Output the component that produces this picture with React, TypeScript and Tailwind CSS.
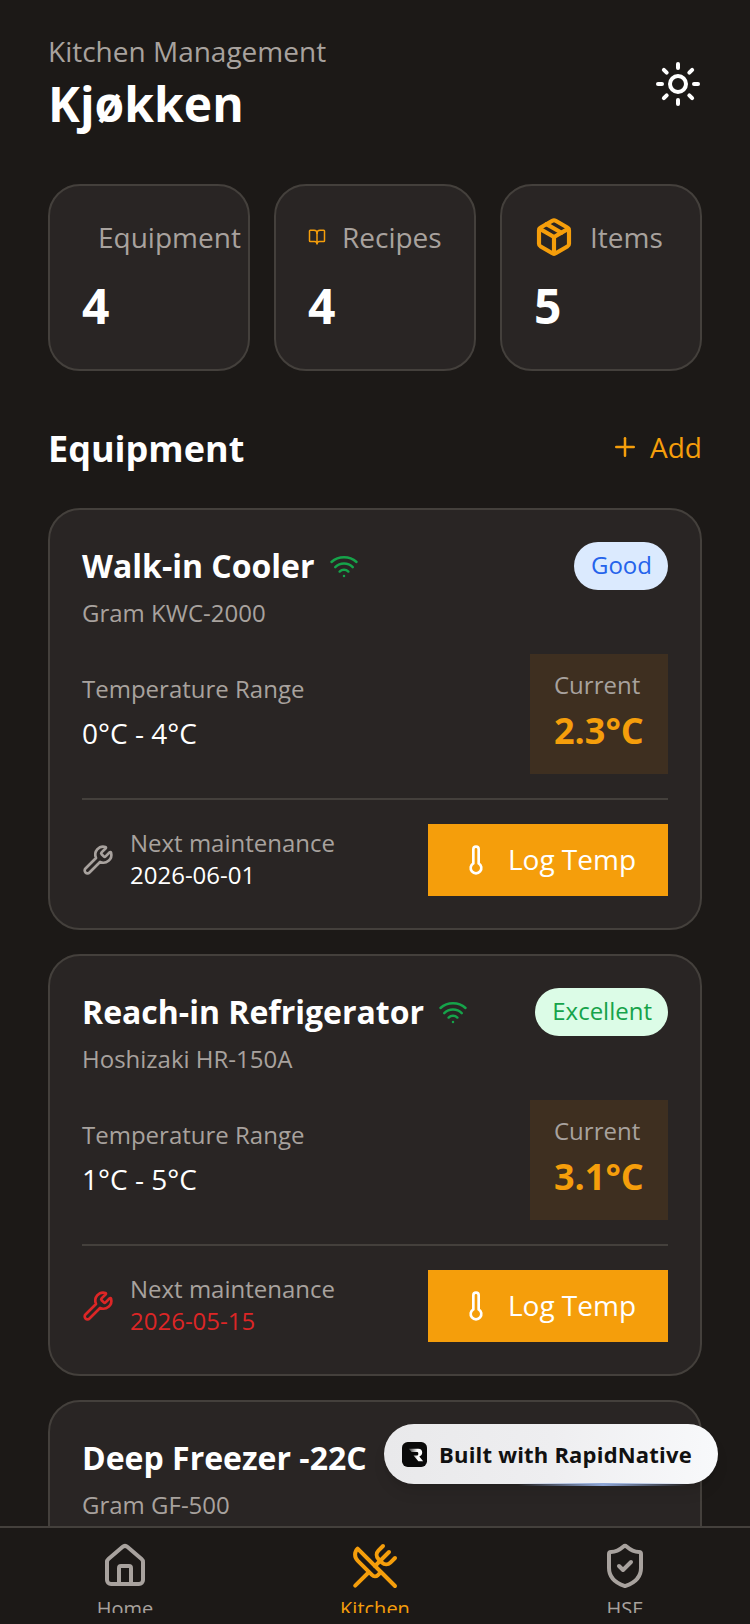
import React from "react";
import { BookOpen, House, Package, Plus, ShieldCheck, Sun, Thermometer, UtensilsCrossed, Wifi, Wrench } from "lucide-react";

interface EquipmentCardProps {
    name: string;
    model: string;
    status: string;
    statusClass: string;
    range: string;
    current: string;
    date: string;
    overdue?: boolean;
    connected?: boolean;
}

const EquipmentCard: React.FC<EquipmentCardProps> = ({ name, model, status, statusClass, range, current, date, overdue, connected }) => {
    return (
        <div className="shrink-0 rounded-[32px] border-2 border-[#44403c] bg-[#292524] p-8">
            <div className="flex items-start justify-between">
                <div>
                    <div className="flex items-center gap-[14px]">
                        <p className="text-[32px] leading-[48px] font-bold text-white">{name}</p>
                        {connected && <Wifi size={30} strokeWidth={2} className="text-[#16a34a]" />}
                    </div>
                    <p className="mt-[5px] text-2xl leading-9 text-[#a8a29e]">{model}</p>
                </div>
                <div className={`h-12 rounded-full pt-[5px] pr-4 pl-[17px] text-2xl leading-9 ${statusClass}`}>{status}</div>
            </div>

            <div className="mt-[23px] flex items-center justify-between">
                <div className="pb-[3px]">
                    <p className="text-2xl leading-9 text-[#a8a29e]">Temperature Range</p>
                    <p className="mt-[5px] text-[28px] leading-[42px] text-white">{range}</p>
                </div>
                <div className="flex w-[138px] flex-col items-start bg-[#3e2f20] pt-[13px] pb-[19px] pl-6">
                    <p className="text-2xl leading-9 text-[#a8a29e]">Current</p>
                    <p className="mt-1 text-4xl leading-[48px] font-bold whitespace-nowrap text-[#f59e0b]">{current}</p>
                </div>
            </div>

            <div className="mt-6 flex items-center justify-between border-t-2 border-[#44403c] pt-6">
                <div className="flex items-center gap-4">
                    <Wrench size={32} strokeWidth={2} className={overdue ? "text-[#dc2626]" : "text-[#a8a29e]"} />
                    <div className="pb-[2px]">
                        <p className="text-2xl leading-8 text-[#a8a29e]">Next maintenance</p>
                        <p className={`text-2xl leading-8 ${overdue ? "text-[#dc2626]" : "text-white"}`}>{date}</p>
                    </div>
                </div>
                <div className="flex h-[72px] w-[240px] items-center justify-center gap-4 bg-[#f59e0b]">
                    <Thermometer size={32} strokeWidth={2} className="text-white" />
                    <span className="pb-[2px] text-[28px] leading-[42px] text-white">Log Temp</span>
                </div>
            </div>
        </div>
    );
};

interface StatCardProps {
    label: string;
    value: string;
    icon?: React.ReactNode;
}

const StatCard: React.FC<StatCardProps> = ({ label, value, icon }) => {
    return (
        <div className="h-[187px] rounded-[32px] border-2 border-[#44403c] bg-[#292524] pt-[33px] pl-8">
            <div className="flex h-9 items-center gap-4 whitespace-nowrap">
                {icon ?? <span className="w-0" />}
                <span className="text-[28px] leading-9 text-[#a8a29e]">{label}</span>
            </div>
            <p className="mt-[21px] text-[48px] leading-[60px] font-bold text-white">{value}</p>
        </div>
    );
};

const NavItem: React.FC<{ label: string; icon: React.ReactNode; active?: boolean }> = ({ label, icon, active }) => {
    return (
        <div className="flex w-[250px] flex-col items-center">
            {icon}
            <span className={`mt-[5px] text-xl leading-7 ${active ? "text-[#f59e0b]" : "text-[#a8a29e]"}`}>{label}</span>
        </div>
    );
};

export default function App() {
    return (
        <div className="relative flex h-[1624px] w-[750px] flex-col overflow-hidden bg-[#1c1917] font-['Open_Sans',sans-serif]">
            <div className="flex min-h-0 flex-1 flex-col overflow-hidden px-12 pt-[31px]">
                {/* header */}
                <div className="flex shrink-0 items-center justify-between">
                    <div>
                        <p className="text-[28px] leading-10 text-[#a8a29e]">Kitchen Management</p>
                        <p className="mt-px text-[48px] leading-[64px] font-bold text-white">Kjøkken</p>
                    </div>
                    <Sun size={48} strokeWidth={2} className="text-white" />
                </div>

                {/* stats */}
                <div className="mt-[48px] grid shrink-0 grid-cols-3 gap-6">
                    <StatCard label="Equipment" value="4" />
                    <StatCard label="Recipes" value="4" icon={<BookOpen size={18} strokeWidth={2} className="text-[#f59e0b]" />} />
                    <StatCard label="Items" value="5" icon={<Package size={40} strokeWidth={2.5} className="text-[#f59e0b]" />} />
                </div>

                <div className="mt-[54px] flex shrink-0 items-center justify-between">
                    <p className="text-4xl leading-[48px] font-bold text-white">Equipment</p>
                    <div className="flex items-center gap-[10px] pb-1">
                        <Plus size={30} strokeWidth={2} className="text-[#f59e0b]" />
                        <span className="text-[28px] leading-10 text-[#f59e0b]">Add</span>
                    </div>
                </div>

                <div className="mt-[35px] flex flex-col gap-6">
                    <EquipmentCard
                        name="Walk-in Cooler"
                        model="Gram KWC-2000"
                        status="Good"
                        statusClass="bg-[#dbeafe] text-[#2563eb]"
                        range="0°C - 4°C"
                        current="2.3°C"
                        date="2026-06-01"
                        connected
                    />
                    <EquipmentCard
                        name="Reach-in Refrigerator"
                        model="Hoshizaki HR-150A"
                        status="Excellent"
                        statusClass="bg-[#dcfce7] text-[#16a34a]"
                        range="1°C - 5°C"
                        current="3.1°C"
                        date="2026-05-15"
                        overdue
                        connected
                    />
                    <EquipmentCard
                        name="Deep Freezer -22C"
                        model="Gram GF-500"
                        status="Good"
                        statusClass="bg-[#dbeafe] text-[#2563eb]"
                        range="-22°C - -18°C"
                        current="-20°C"
                        date="2026-07-01"
                    />
                </div>
            </div>

            {/* bottom nav, labels are clipped in the reference */}
            <div className="shrink-0 border-t-2 border-[#44403c] bg-[#1c1917] pt-[14px] pb-[11px]">
                <div className="flex h-[71px] justify-between overflow-hidden">
                    <NavItem label="Home" icon={<House size={48} strokeWidth={2} className="shrink-0 text-[#a8a29e]" />} />
                    <NavItem label="Kitchen" active icon={<UtensilsCrossed size={48} strokeWidth={2} className="shrink-0 text-[#f59e0b]" />} />
                    <NavItem label="HSE" icon={<ShieldCheck size={48} strokeWidth={2} className="shrink-0 text-[#a8a29e]" />} />
                </div>
            </div>

            {/* floating badge */}
            <div className="absolute top-[1424px] left-[384px] flex h-[60px] w-[334px] items-center gap-3 rounded-full bg-gradient-to-r from-[#e9e9eb] via-[#eeeef0] to-[#f8f9fb] pl-[18px] shadow-lg">
                <svg width="25" height="25" viewBox="0 0 26 26">
                    <defs>
                        <linearGradient id="rapidR" x1="0" y1="0" x2="1" y2="0">
                            <stop offset="0" stopColor="#3a3a3a" />
                            <stop offset="0.6" stopColor="#ffffff" />
                        </linearGradient>
                    </defs>
                    <rect width="26" height="26" rx="6" fill="#0a0a0a" />
                    <path d="M7 7H17Q21 7 21 11Q21 14 18 15L22 20H17L12 14H16Q17 14 17 12.2Q17 10.5 16 10.5H10Z" fill="url(#rapidR)" />
                </svg>
                <span className="text-[22px] font-bold tracking-[0.2px] whitespace-nowrap text-[#111111]">Built with RapidNative</span>
                <div className="absolute right-[30px] bottom-[-2px] h-[3px] w-[170px] rounded-full bg-gradient-to-r from-transparent via-[#8ea6d6] to-transparent" />
            </div>
        </div>
    );
}
